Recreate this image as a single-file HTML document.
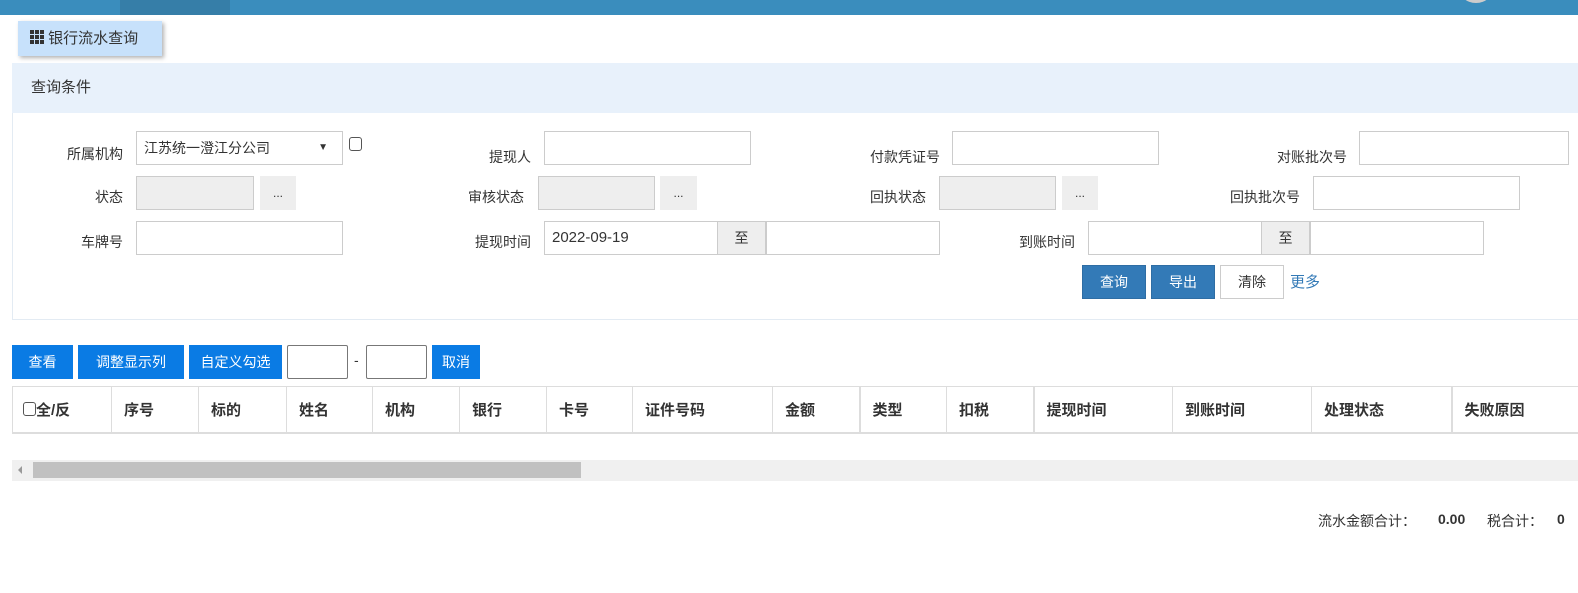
<!DOCTYPE html>
<html><head><meta charset="utf-8"><style>
*{box-sizing:border-box;margin:0;padding:0}
body{width:1578px;height:593px;overflow:hidden;background:#fff;font-family:"Liberation Sans","Noto Sans CJK SC",sans-serif;font-size:14px;color:#333;position:relative}
.a{position:absolute}
.inp{position:absolute;height:34px;border:1px solid #ccc;background:#fff}
.gr{background:#eee}
.lbl{position:absolute;text-align:right;line-height:34px}
.dots{position:absolute;width:36px;height:34px;background:#eee;text-align:center;line-height:34px;font-size:12px}
.zhi{position:absolute;width:49px;height:34px;background:#eee;border:1px solid #ccc;text-align:center;line-height:32px}
.bb{position:absolute;height:34px;color:#fff;text-align:center;line-height:34px;background:#0a7be4}
th{font-weight:bold;text-align:left;padding-left:12px;border-right:1px solid #ddd;height:46px;font-size:15px}
</style></head><body>
<div class="a" style="left:0;top:0;width:1578px;height:15px;background:#3a8dbd"></div>
<div class="a" style="left:120px;top:0;width:110px;height:15px;background:#367ea8"></div>
<div class="a" style="left:1458px;top:-30px;width:36px;height:33px;border-radius:50%;background:#ccc"></div>
<div class="a" style="left:18px;top:21px;width:144px;height:35px;background:#c7e1fb;box-shadow:2px 2px 4px rgba(0,0,0,.3);line-height:35px;padding-left:12px;font-size:15px">
<span style="display:inline-block;width:14px;height:14px;vertical-align:-1px;background:
radial-gradient(#333 0,#333 0) 0 0/4px 4px no-repeat;position:relative">
<svg width="14" height="14" style="position:absolute;left:0;top:0"><g fill="#333"><rect x="0" y="0" width="4" height="4"/><rect x="5" y="0" width="4" height="4"/><rect x="10" y="0" width="4" height="4"/><rect x="0" y="5" width="4" height="4"/><rect x="5" y="5" width="4" height="4"/><rect x="10" y="5" width="4" height="4"/><rect x="0" y="10" width="4" height="4"/><rect x="5" y="10" width="4" height="4"/><rect x="10" y="10" width="4" height="4"/></g></svg></span> 银行流水查询</div>
<div class="a" style="left:12px;top:63px;width:1570px;height:257px;border:1px solid #e3ebf3"></div>
<div class="a" style="left:12px;top:63px;width:1570px;height:50px;background:#e8f1fb;line-height:50px;padding-left:19px;font-size:15px">查询条件</div>

<div class="lbl" style="left:20px;top:137px;width:103px">所属机构</div>
<div class="inp" style="left:136px;top:131px;width:207px;line-height:32px;padding-left:7px">江苏统一澄江分公司<span style="position:absolute;right:14px;top:0;font-size:10px">▼</span></div>
<div class="a" style="left:349px;top:137px;width:13px;height:14px;border:1px solid #555;border-radius:3px"></div>
<div class="lbl" style="left:400px;top:140px;width:131px">提现人</div>
<div class="inp" style="left:544px;top:131px;width:207px"></div>
<div class="lbl" style="left:800px;top:140px;width:140px">付款凭证号</div>
<div class="inp" style="left:952px;top:131px;width:207px"></div>
<div class="lbl" style="left:1200px;top:140px;width:147px">对账批次号</div>
<div class="inp" style="left:1359px;top:131px;width:210px"></div>

<div class="lbl" style="left:20px;top:180px;width:103px">状态</div>
<div class="inp gr" style="left:136px;top:176px;width:118px"></div>
<div class="dots" style="left:260px;top:176px">...</div>
<div class="lbl" style="left:400px;top:180px;width:124px">审核状态</div>
<div class="inp gr" style="left:538px;top:176px;width:117px"></div>
<div class="dots" style="left:660px;top:176px;width:37px">...</div>
<div class="lbl" style="left:800px;top:180px;width:126px">回执状态</div>
<div class="inp gr" style="left:939px;top:176px;width:117px"></div>
<div class="dots" style="left:1062px;top:176px">...</div>
<div class="lbl" style="left:1150px;top:180px;width:150px">回执批次号</div>
<div class="inp" style="left:1313px;top:176px;width:207px"></div>

<div class="lbl" style="left:20px;top:225px;width:103px">车牌号</div>
<div class="inp" style="left:136px;top:221px;width:207px"></div>
<div class="lbl" style="left:400px;top:225px;width:131px">提现时间</div>
<div class="inp" style="left:544px;top:221px;width:174px;line-height:32px;padding-left:7px;font-size:15px">2022-09-19</div>
<div class="zhi" style="left:717px;top:221px">至</div>
<div class="inp" style="left:766px;top:221px;width:174px"></div>
<div class="lbl" style="left:900px;top:225px;width:175px">到账时间</div>
<div class="inp" style="left:1088px;top:221px;width:174px"></div>
<div class="zhi" style="left:1261px;top:221px">至</div>
<div class="inp" style="left:1310px;top:221px;width:174px"></div>

<div class="bb" style="left:1082px;top:265px;width:64px;background:#337ab7;border:1px solid #2e6da4;line-height:32px">查询</div>
<div class="bb" style="left:1151px;top:265px;width:64px;background:#337ab7;border:1px solid #2e6da4;line-height:32px">导出</div>
<div class="bb" style="left:1220px;top:265px;width:64px;background:#fff;color:#333;border:1px solid #ccc;line-height:32px">清除</div>
<div class="a" style="left:1290px;top:271px;color:#337ab7;font-size:15px">更多</div>

<div class="bb" style="left:12px;top:345px;width:61px">查看</div>
<div class="bb" style="left:78px;top:345px;width:106px">调整显示列</div>
<div class="bb" style="left:189px;top:345px;width:93px">自定义勾选</div>
<div class="inp" style="left:287px;top:345px;width:61px;border-color:#777;border-radius:2px"></div>
<div class="a" style="left:354px;top:352px">-</div>
<div class="inp" style="left:366px;top:345px;width:61px;border-color:#777;border-radius:2px"></div>
<div class="bb" style="left:432px;top:345px;width:48px">取消</div>

<table class="a" style="left:12px;top:386px;width:1570px;border-collapse:collapse;border-top:1px solid #ddd;border-left:1px solid #ddd;border-bottom:2px solid #ddd;table-layout:fixed">
<tr><th style="width:99px;padding-left:10px"><span style="display:inline-block;width:13px;height:14px;border:1px solid #555;border-radius:3px;vertical-align:-1px"></span>全/反</th>
<th style="width:87px">序号</th><th style="width:88px">标的</th><th style="width:86px">姓名</th><th style="width:87px">机构</th><th style="width:87px">银行</th><th style="width:86px">卡号</th><th style="width:140px">证件号码</th><th style="width:87px;border-right:2px solid #ddd">金额</th><th style="width:87px">类型</th><th style="width:87px;border-right:2px solid #ddd">扣税</th><th style="width:139px">提现时间</th><th style="width:139px">到账时间</th><th style="width:140px;border-right:2px solid #ddd">处理状态</th><th>失败原因</th></tr></table>

<div class="a" style="left:12px;top:460px;width:1566px;height:21px;background:#f0f0f0"></div>
<div class="a" style="left:18px;top:466px;width:0;height:0;border-top:4px solid transparent;border-bottom:4px solid transparent;border-right:4px solid #999"></div>
<div class="a" style="left:33px;top:462px;width:548px;height:16px;background:#c1c1c1"></div>

<div class="a" style="left:1318px;top:511px">流水金额合计：</div>
<div class="a" style="left:1438px;top:511px;font-weight:bold">0.00</div>
<div class="a" style="left:1487px;top:511px">税合计：</div>
<div class="a" style="left:1557px;top:511px;font-weight:bold">0</div>
</body></html>
